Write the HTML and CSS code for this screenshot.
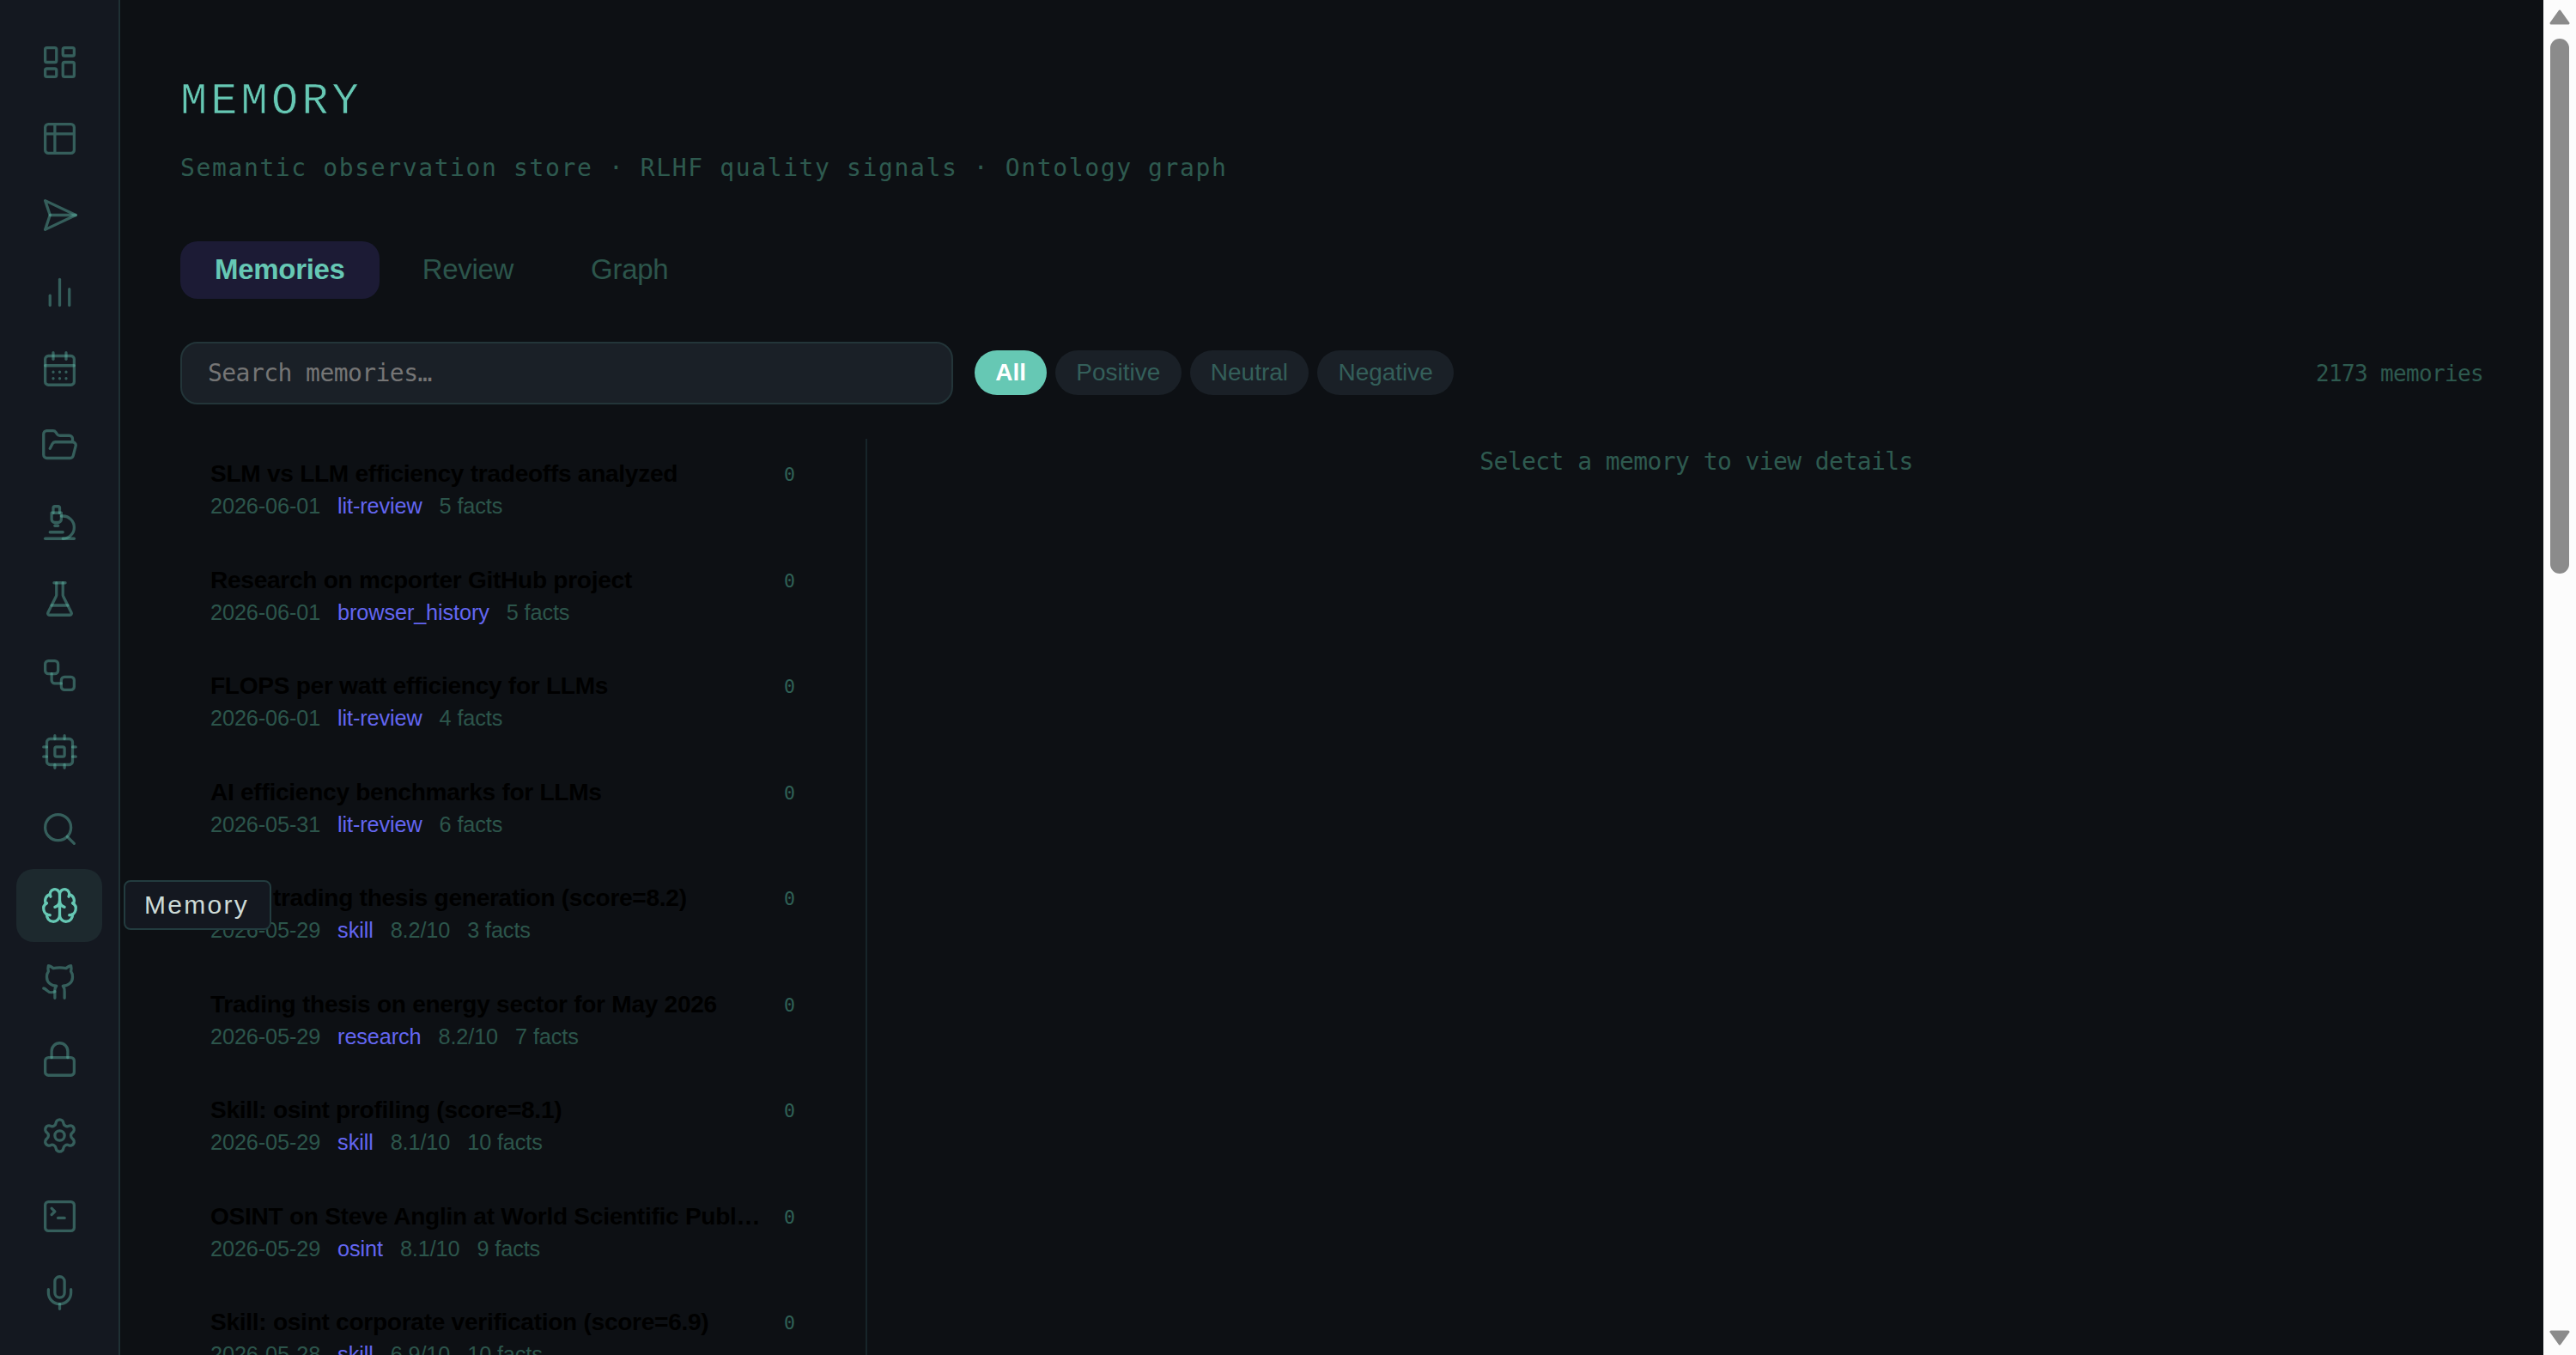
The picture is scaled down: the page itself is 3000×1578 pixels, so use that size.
FILE: index.html
```html
<!DOCTYPE html>
<html lang="en">
  <head>
    <meta charset="UTF-8" />
    <meta name="viewport" content="width=device-width, initial-scale=1.0" />
    <title>Memory</title>
    <link rel="stylesheet" href="styles.css">
  </head>
  <body>
    <nav class="sidebar">
      <a class="nav-item"><svg class="icon" viewBox="0 0 24 24"><rect x="3" y="3" width="7" height="9" rx="1"/><rect x="14" y="3" width="7" height="5" rx="1"/><rect x="14" y="12" width="7" height="9" rx="1"/><rect x="3" y="16" width="7" height="5" rx="1"/></svg></a>
      <a class="nav-item"><svg class="icon" viewBox="0 0 24 24"><path d="M5 3h14a2 2 0 0 1 2 2v14a2 2 0 0 1-2 2H5a2 2 0 0 1-2-2V5a2 2 0 0 1 2-2zM3 9h18M9 3v18"/></svg></a>
      <a class="nav-item"><svg class="icon" viewBox="0 0 24 24"><path d="m3 3 3 9-3 9 19-9Z"/><path d="M6 12h16"/></svg></a>
      <a class="nav-item"><svg class="icon" viewBox="0 0 24 24"><path d="M18 20V10"/><path d="M12 20V4"/><path d="M6 20v-6"/></svg></a>
      <a class="nav-item"><svg class="icon" viewBox="0 0 24 24"><path d="M8 2v4"/><path d="M16 2v4"/><rect x="3" y="4" width="18" height="18" rx="2"/><path d="M3 10h18"/><path d="M8 14h.01M12 14h.01M16 14h.01M8 18h.01M12 18h.01M16 18h.01"/></svg></a>
      <a class="nav-item"><svg class="icon" viewBox="0 0 24 24"><path d="m6 14 1.5-2.9A2 2 0 0 1 9.24 10H20a2 2 0 0 1 1.94 2.5l-1.54 6a2 2 0 0 1-1.95 1.5H4a2 2 0 0 1-2-2V5a2 2 0 0 1 2-2h3.9a2 2 0 0 1 1.69.9l.81 1.2a2 2 0 0 0 1.67.9H18a2 2 0 0 1 2 2v2"/></svg></a>
      <a class="nav-item"><svg class="icon" viewBox="0 0 24 24"><path d="M6 18h8"/><path d="M3 22h18"/><path d="M14 22a7 7 0 1 0 0-14h-1"/><path d="M9 14h2"/><path d="M9 12a2 2 0 0 1-2-2V6h6v4a2 2 0 0 1-2 2Z"/><path d="M12 6V3a1 1 0 0 0-1-1H9a1 1 0 0 0-1 1v3"/></svg></a>
      <a class="nav-item"><svg class="icon" viewBox="0 0 24 24"><path d="M10 2v7.527a2 2 0 0 1-.211.896L4.72 20.55a1 1 0 0 0 .9 1.45h12.76a1 1 0 0 0 .9-1.45l-5.069-10.127A2 2 0 0 1 14 9.527V2"/><path d="M8.5 2h7"/><path d="M7 16h10"/></svg></a>
      <a class="nav-item"><svg class="icon" viewBox="0 0 24 24"><rect x="3" y="3" width="8" height="8" rx="2"/><path d="M7 11v4a2 2 0 0 0 2 2h4"/><rect x="13" y="13" width="8" height="8" rx="2"/></svg></a>
      <a class="nav-item"><svg class="icon" viewBox="0 0 24 24"><rect x="4" y="4" width="16" height="16" rx="2"/><rect x="9" y="9" width="6" height="6" rx="1"/><path d="M15 2v2M15 20v2M2 15h2M2 9h2M20 15h2M20 9h2M9 2v2M9 20v2"/></svg></a>
      <a class="nav-item"><svg class="icon" viewBox="0 0 24 24"><circle cx="11" cy="11" r="8"/><path d="m21 21-4.3-4.3"/></svg></a>
      <a class="nav-item active">
        <svg class="icon" viewBox="0 0 24 24"><path d="M12 18V5"/><path d="M15 13a4.17 4.17 0 0 1-3-4 4.17 4.17 0 0 1-3 4"/><path d="M17.598 6.5A3 3 0 1 0 12 5a3 3 0 1 0-5.598 1.5"/><path d="M17.997 5.125a4 4 0 0 1 2.526 5.77"/><path d="M18 18a4 4 0 0 0 2-7.464"/><path d="M19.967 17.483A4 4 0 1 1 12 18a4 4 0 1 1-7.967-.517"/><path d="M6 18a4 4 0 0 1-2-7.464"/><path d="M6.003 5.125a4 4 0 0 0-2.526 5.77"/></svg>
        <span class="tooltip">Memory</span>
      </a>
      <a class="nav-item"><svg class="icon" viewBox="0 0 24 24"><path d="M15 22v-4a4.8 4.8 0 0 0-1-3.5c3 0 6-2 6-5.5.08-1.25-.27-2.48-1-3.5.28-1.15.28-2.35 0-3.5 0 0-1 0-3 1.5-2.64-.5-5.36-.5-8 0C6 2 5 2 5 2c-.3 1.15-.3 2.35 0 3.5A5.403 5.403 0 0 0 4 9c0 3.5 3 5.5 6 5.5-.39.49-.68 1.05-.85 1.65-.17.6-.22 1.23-.15 1.85v4"/><path d="M9 18c-4.51 2-5-2-7-2"/></svg></a>
      <a class="nav-item"><svg class="icon" viewBox="0 0 24 24"><rect x="3" y="11" width="18" height="11" rx="2"/><path d="M7 11V7a5 5 0 0 1 10 0v4"/></svg></a>
      <a class="nav-item"><svg class="icon" viewBox="0 0 24 24"><path d="M9.671 4.136a2.34 2.34 0 0 1 4.659 0 2.34 2.34 0 0 0 3.319 1.915 2.34 2.34 0 0 1 2.33 4.033 2.34 2.34 0 0 0 0 3.831 2.34 2.34 0 0 1-2.33 4.033 2.34 2.34 0 0 0-3.319 1.915 2.34 2.34 0 0 1-4.659 0 2.34 2.34 0 0 0-3.32-1.915 2.34 2.34 0 0 1-2.33-4.033 2.34 2.34 0 0 0 0-3.831A2.34 2.34 0 0 1 6.35 6.051a2.34 2.34 0 0 0 3.319-1.915"/><circle cx="12" cy="12" r="3"/></svg></a>
      <div class="nav-bottom">
        <a class="nav-item"><svg class="icon" viewBox="0 0 24 24"><path d="m7 11 2-2-2-2"/><path d="M11 13h4"/><rect x="3" y="3" width="18" height="18" rx="2"/></svg></a>
        <a class="nav-item"><svg class="icon" viewBox="0 0 24 24"><path d="M12 19v3"/><path d="M19 10v2a7 7 0 0 1-14 0v-2"/><rect x="9" y="2" width="6" height="13" rx="3"/></svg></a>
      </div>
    </nav>

    <main class="main">
      <h1 class="page-title">MEMORY</h1>
      <p class="page-subtitle">Semantic observation store · RLHF quality signals · Ontology graph</p>

      <div class="tabs">
        <button class="tab active">Memories</button>
        <button class="tab">Review</button>
        <button class="tab">Graph</button>
      </div>

      <div class="toolbar">
        <input class="search" type="text" placeholder="Search memories…" />
        <div class="filters">
          <button class="pill active">All</button>
          <button class="pill">Positive</button>
          <button class="pill">Neutral</button>
          <button class="pill">Negative</button>
        </div>
        <span class="count">2173 memories</span>
      </div>

      <div class="panels">
        <div class="list">
          <div class="memory">
            <div class="memory-head"><span class="memory-title">SLM vs LLM efficiency tradeoffs analyzed</span><span class="score">0</span></div>
            <div class="meta"><span>2026-06-01</span><span class="source">lit-review</span><span>5 facts</span></div>
          </div>
          <div class="memory">
            <div class="memory-head"><span class="memory-title">Research on mcporter GitHub project</span><span class="score">0</span></div>
            <div class="meta"><span>2026-06-01</span><span class="source">browser_history</span><span>5 facts</span></div>
          </div>
          <div class="memory">
            <div class="memory-head"><span class="memory-title">FLOPS per watt efficiency for LLMs</span><span class="score">0</span></div>
            <div class="meta"><span>2026-06-01</span><span class="source">lit-review</span><span>4 facts</span></div>
          </div>
          <div class="memory">
            <div class="memory-head"><span class="memory-title">AI efficiency benchmarks for LLMs</span><span class="score">0</span></div>
            <div class="meta"><span>2026-05-31</span><span class="source">lit-review</span><span>6 facts</span></div>
          </div>
          <div class="memory">
            <div class="memory-head"><span class="memory-title">Skill: trading thesis generation (score=8.2)</span><span class="score">0</span></div>
            <div class="meta"><span>2026-05-29</span><span class="source">skill</span><span>8.2/10</span><span>3 facts</span></div>
          </div>
          <div class="memory">
            <div class="memory-head"><span class="memory-title">Trading thesis on energy sector for May 2026</span><span class="score">0</span></div>
            <div class="meta"><span>2026-05-29</span><span class="source">research</span><span>8.2/10</span><span>7 facts</span></div>
          </div>
          <div class="memory">
            <div class="memory-head"><span class="memory-title">Skill: osint profiling (score=8.1)</span><span class="score">0</span></div>
            <div class="meta"><span>2026-05-29</span><span class="source">skill</span><span>8.1/10</span><span>10 facts</span></div>
          </div>
          <div class="memory">
            <div class="memory-head"><span class="memory-title">OSINT on Steve Anglin at World Scientific Publ…</span><span class="score">0</span></div>
            <div class="meta"><span>2026-05-29</span><span class="source">osint</span><span>8.1/10</span><span>9 facts</span></div>
          </div>
          <div class="memory">
            <div class="memory-head"><span class="memory-title">Skill: osint corporate verification (score=6.9)</span><span class="score">0</span></div>
            <div class="meta"><span>2026-05-28</span><span class="source">skill</span><span>6.9/10</span><span>10 facts</span></div>
          </div>
        </div>
        <div class="detail">Select a memory to view details</div>
      </div>
    </main>

    <div class="scrollbar">
      <svg class="arrow" viewBox="0 0 24 18"><path d="M12 2 22 16H2Z"/></svg>
      <div class="thumb"></div>
      <svg class="arrow arrow-down" viewBox="0 0 24 18"><path d="M12 16 2 2H22Z"/></svg>
    </div>
  </body>
</html>
```

FILE: styles.css
```css
* {
  box-sizing: border-box;
}
body {
  margin: 0;
  height: 1578px;
  display: flex;
  overflow: hidden;
  background: #0d1014;
  font-family: "Liberation Sans", Arial, sans-serif;
}
button {
  border: none;
  background: none;
  font-family: inherit;
}

/* sidebar */
.sidebar {
  width: 140px;
  flex-shrink: 0;
  padding: 30px 19px 0;
  border-right: 2px solid #1f3034;
  background: #141820;
  display: flex;
  flex-direction: column;
  gap: 4.3px;
}
.nav-item {
  position: relative;
  width: 100px;
  height: 85px;
  flex-shrink: 0;
  border-radius: 20px;
  display: flex;
  align-items: center;
  justify-content: center;
}
.nav-item.active {
  background: #1d292e;
}
.nav-bottom {
  margin-top: 4.5px;
  display: flex;
  flex-direction: column;
  gap: 4.3px;
}
.icon {
  width: 45px;
  height: 45px;
  margin: 0 0 0.5px 1px;
  fill: none;
  stroke: rgba(102, 200, 180, 0.4);
  stroke-width: 1.75;
  stroke-linecap: round;
  stroke-linejoin: round;
}
.nav-item.active .icon {
  stroke: #66c8b4;
}
.tooltip {
  position: absolute;
  left: 125px;
  top: 13px;
  z-index: 5;
  width: 172px;
  height: 58px;
  padding-left: 22px;
  border: 2px solid #233c3f;
  border-radius: 8px;
  background: #141820;
  color: #cddbd7;
  font-size: 30px;
  line-height: 53px;
  letter-spacing: 2.3px;
}

/* content */
.main {
  flex: 1;
  min-width: 0;
  padding: 80px 70px 0;
}
.page-title {
  margin: 0;
  height: 70px;
  color: #66c8b4;
  font-family: "Liberation Mono", monospace;
  font-size: 52px;
  font-weight: 400;
  line-height: 78px;
  letter-spacing: 4.1px;
  -webkit-text-stroke: 0.7px #0d1014;
}
.page-subtitle {
  margin: 26px 0 0;
  color: #2e5a4f;
  font-family: "DejaVu Sans Mono", monospace;
  font-size: 28px;
  line-height: 40px;
  letter-spacing: 1.62px;
}
.tabs {
  margin-top: 65px;
  display: flex;
  gap: 10px;
}
.tab {
  height: 67px;
  padding: 0 40px 2px;
  border-radius: 20px;
  color: #2c554b;
  font-size: 33px;
  letter-spacing: -0.3px;
}
.tab.active {
  background: #1c1b35;
  color: #66c8b4;
  font-weight: 700;
}
.toolbar {
  margin-top: 50px;
  display: flex;
  align-items: center;
}
.search {
  width: 900px;
  height: 73px;
  padding: 0 30px;
  border: 2px solid #233539;
  border-radius: 20px;
  background: #1a2027;
  font-family: "DejaVu Sans Mono", monospace;
  font-size: 28px;
  letter-spacing: -0.56px;
}
.search::placeholder {
  color: #757575;
}
.filters {
  margin: 0 0 1px 25px;
  display: flex;
  gap: 10px;
}
.pill {
  height: 52px;
  padding: 0 24.2px 1px;
  border-radius: 26px;
  background: #1a2027;
  color: #345f5a;
  font-size: 28px;
}
.pill.active {
  background: #66c8b4;
  color: #fff;
  font-weight: 700;
}
.count {
  margin-left: auto;
  color: #2e5a4f;
  font-family: "DejaVu Sans Mono", monospace;
  font-size: 26px;
  letter-spacing: -0.65px;
}

/* memory list + detail */
.panels {
  margin-top: 40px;
  display: flex;
}
.list {
  width: 800px;
  height: 1067px;
  flex-shrink: 0;
  padding-right: 47px;
  border-right: 2px solid #17252a;
  overflow: hidden;
}
.memory {
  height: 123.5px;
  padding: 25px 35px 0;
}
.memory-head {
  display: flex;
  align-items: center;
  gap: 19px;
}
.memory-title {
  flex: 1;
  color: #000;
  font-size: 28.1px;
  font-weight: 700;
  line-height: 32px;
  letter-spacing: -0.29px;
  white-space: nowrap;
  overflow: hidden;
  text-overflow: ellipsis;
}
.score {
  width: 13px;
  padding-top: 1px;
  color: #2f6156;
  font-family: "DejaVu Sans Mono", monospace;
  font-size: 21.5px;
  line-height: 31px;
}
.meta {
  margin-top: 7px;
  display: flex;
  gap: 20px;
  color: #2c554b;
  font-size: 25.3px;
  line-height: 29px;
  letter-spacing: -0.13px;
}
.source {
  color: #6366f1;
}
.detail {
  flex: 1;
  padding: 7px 0 0 49px;
  color: #2e5a4f;
  font-family: "DejaVu Sans Mono", monospace;
  font-size: 28px;
  line-height: 40px;
  letter-spacing: -0.58px;
  text-align: center;
}

/* scrollbar */
.scrollbar {
  width: 38px;
  flex-shrink: 0;
  padding: 11px 0;
  background: #fcfcfc;
  display: flex;
  flex-direction: column;
  align-items: center;
}
.arrow {
  width: 24px;
  height: 18px;
  flex-shrink: 0;
  fill: #8b8b8b;
  stroke: #8b8b8b;
  stroke-width: 3;
  stroke-linejoin: round;
}
.arrow-down {
  margin-top: auto;
}
.thumb {
  width: 22px;
  height: 623px;
  margin-top: 16px;
  border-radius: 11px;
  background: #8b8b8b;
}
```
